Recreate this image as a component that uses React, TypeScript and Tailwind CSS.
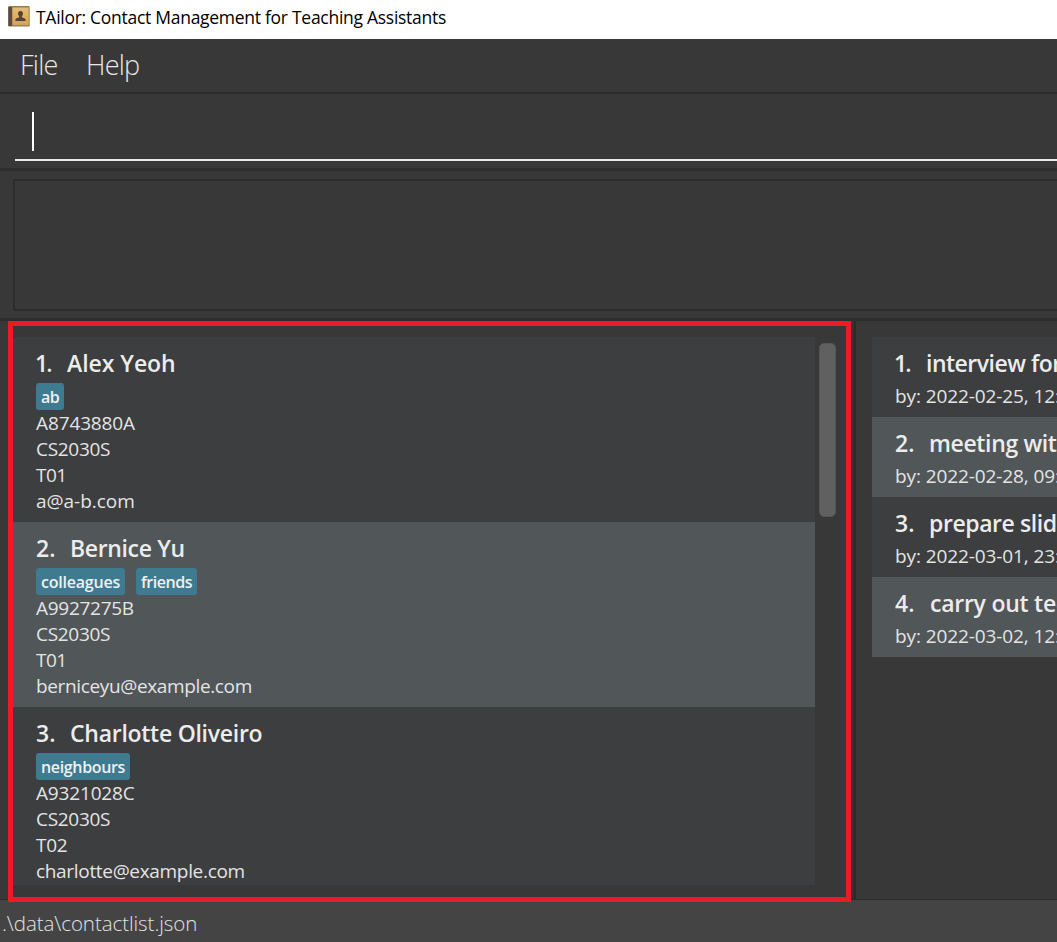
type Tag = { label: string; tracking: string };

type Contact = {
  index: number;
  name: string;
  nameClass: string;
  tags: Tag[];
  lines: { text: string; tracking: string }[];
};

const contacts: Contact[] = [
  {
    index: 1,
    name: "Alex Yeoh",
    nameClass: "ml-[31px] tracking-[-0.04px]",
    tags: [{ label: "ab", tracking: "tracking-[-0.5px]" }],
    lines: [
      { text: "A8743880A", tracking: "tracking-[-0.12px]" },
      { text: "CS2030S", tracking: "tracking-[-0.3px]" },
      { text: "T01", tracking: "tracking-[-0.5px]" },
      { text: "a@a-b.com", tracking: "tracking-[-0.02px]" },
    ],
  },
  {
    index: 2,
    name: "Bernice Yu",
    nameClass: "ml-[34px] tracking-[-0.36px]",
    tags: [
      { label: "colleagues", tracking: "tracking-[-0.22px]" },
      { label: "friends", tracking: "tracking-[-0.45px]" },
    ],
    lines: [
      { text: "A9927275B", tracking: "tracking-[-0.28px]" },
      { text: "CS2030S", tracking: "tracking-[-0.3px]" },
      { text: "T01", tracking: "tracking-[-0.5px]" },
      { text: "berniceyu@example.com", tracking: "tracking-[-0.36px]" },
    ],
  },
  {
    index: 3,
    name: "Charlotte Oliveiro",
    nameClass: "ml-[34px] tracking-[-0.27px]",
    tags: [{ label: "neighbours", tracking: "tracking-[-0.34px]" }],
    lines: [
      { text: "A9321028C", tracking: "tracking-[-0.16px]" },
      { text: "CS2030S", tracking: "tracking-[-0.3px]" },
      { text: "T02", tracking: "tracking-[-0.3px]" },
      { text: "charlotte@example.com", tracking: "tracking-[-0.32px]" },
    ],
  },
];

const tasks = [
  { index: 1, title: "interview for", titleClass: "ml-[31px] tracking-[-0.5px]", due: "by: 2022-02-25, 12:" },
  { index: 2, title: "meeting with", titleClass: "ml-[34px] tracking-[-0.36px]", due: "by: 2022-02-28, 09:" },
  { index: 3, title: "prepare slides", titleClass: "ml-[34px] tracking-[-0.42px]", due: "by: 2022-03-01, 23:" },
  { index: 4, title: "carry out tec", titleClass: "ml-[35px] tracking-[-0.25px]", due: "by: 2022-03-02, 12:" },
];

function ContactBookIcon() {
  return (
    <svg width="22" height="21" viewBox="0 0 22 21" className="block shrink-0">
      <defs>
        <linearGradient id="cover" x1="0" y1="0" x2="0" y2="1">
          <stop offset="0" stopColor="#e5bd78" />
          <stop offset="0.75" stopColor="#dda954" />
          <stop offset="1" stopColor="#c9a568" />
        </linearGradient>
      </defs>
      <rect x="0.3" y="0" width="21.4" height="20.5" rx="1" fill="#9b7b4b" />
      <rect x="0.3" y="1" width="3.7" height="19" fill="#594b42" />
      <rect x="4.5" y="1.5" width="16.2" height="17.7" fill="url(#cover)" />
      <path d="M12.5 5c-1.7 0-2.6 1.2-2.5 2.8.1 1.1.6 2 1.2 2.5 0 1-.5 1.3-1.7 1.7-1.4.4-2.2.8-2.2 3h10.4c0-2.2-.8-2.6-2.2-3-1.2-.4-1.7-.7-1.7-1.7.6-.5 1.1-1.4 1.2-2.5C15.100 6.200 14.200 5 12.500 5z" fill="#54452f" />
    </svg>
  );
}

function RowHeading({ index, text, textClass }: { index: number; text: string; textClass: string }) {
  return (
    <div className="flex h-8 text-[23px] leading-8 font-semibold text-[#ececec]">
      <span className={index === 1 ? "-ml-px mr-px w-0 tracking-[-2px]" : "w-0"}>{index}.</span>
      <span className={textClass}>{text}</span>
    </div>
  );
}

function ContactCard({ contact }: { contact: Contact }) {
  return (
    <li className={`h-[185px] shrink-0 pt-[10px] pl-[23px] ${contact.index % 2 ? "bg-[#3c3e3f]" : "bg-[#515658]"}`}>
      <RowHeading index={contact.index} text={contact.name} textClass={contact.nameClass} />
      <div className="mt-[4px] flex h-[27px] gap-[11px]">
        {contact.tags.map((tag) => (
          <span key={tag.label} className={`h-[27px] rounded-[3px] bg-[#3e7b91] px-[5px] text-[16px] leading-[29px] font-semibold text-[#f0f0f0] ${tag.tracking}`}>
            {tag.label}
          </span>
        ))}
      </div>
      {contact.lines.map((line) => (
        <p key={line.text} className={`h-[26px] text-[19px] leading-[26px] text-[#e4e4e4] ${line.tracking}`}>
          {line.text}
        </p>
      ))}
    </li>
  );
}

export default function App() {
  return (
    <div className="relative flex h-[942px] w-[1057px] flex-col overflow-hidden bg-[#383838] font-['Open_Sans','Noto_Sans',sans-serif] whitespace-nowrap">
      <header className="flex h-[39px] shrink-0 items-start bg-white pt-[6px] pl-2">
        <ContactBookIcon />
        <h1 className="-mt-px ml-[6px] text-[17.5px] leading-6 tracking-[-0.28px] text-black">
          TAilor: Contact Management for Teaching Assistants
        </h1>
      </header>

      <nav className="flex h-[55px] shrink-0 border-b-2 border-[#2c2c2c] pl-5 text-[27px] leading-[51px] font-light text-[#e6e6e6]">
        <span className="w-[66px] tracking-[-0.75px]">File</span>
        <span className="tracking-[-0.75px]">Help</span>
      </nav>

      <div className="h-[77px] shrink-0 border-b-[3px] border-[#2d2d2d] pl-[15px]">
        <div className="flex h-[67px] items-start border-b-2 border-[#e8e8e8] pt-[18px] pl-[17px]">
          <span className="h-[39px] w-[1.5px] bg-white" />
        </div>
      </div>

      <div className="h-[150px] shrink-0 border-b-[3px] border-[#2d2d2d] pt-2 pl-[13px]">
        <div className="h-[132px] border-2 border-r-0 border-[#2d2d2d]" />
      </div>

      <main className="flex h-[578px] shrink-0">
        <section className="flex w-[852px] pt-4 pl-[13px]">
          <ul className="flex h-[548px] w-[802px] flex-col overflow-hidden">
            {contacts.map((contact) => (
              <ContactCard key={contact.index} contact={contact} />
            ))}
          </ul>
          <div className="mt-[6px] ml-[4px] h-[174px] w-[17px] rounded-[5px] border border-[#555555] bg-[#606060]" />
        </section>
        <div className="w-[4px] border-r-2 border-[#2b2b2b] bg-[#323232]" />
        <section className="flex-1 overflow-hidden pt-4 pl-4">
          <ul>
            {tasks.map((task) => (
              <li key={task.index} className={`h-20 pt-[10px] pl-[23px] ${task.index % 2 ? "bg-[#3c3e3f]" : "bg-[#515658]"}`}>
                <RowHeading index={task.index} text={task.title} textClass={task.titleClass} />
                <p className="mt-[4px] h-[26px] text-[19px] leading-[26px] tracking-[-0.1px] text-[#e4e4e4]">{task.due}</p>
              </li>
            ))}
          </ul>
        </section>
      </main>

      <footer className="h-[43px] shrink-0 border-t border-[#2b2b2b] bg-[#444444] pl-[2px] text-[20.5px] leading-[47px] font-light tracking-[-0.06px] text-[#e2e2e2]">
        .\data\contactlist.json
      </footer>

      <div className="pointer-events-none absolute top-[321px] left-[8px] h-[581px] w-[843px] border-[5px] border-[#ed1c24]" />
    </div>
  );
}
